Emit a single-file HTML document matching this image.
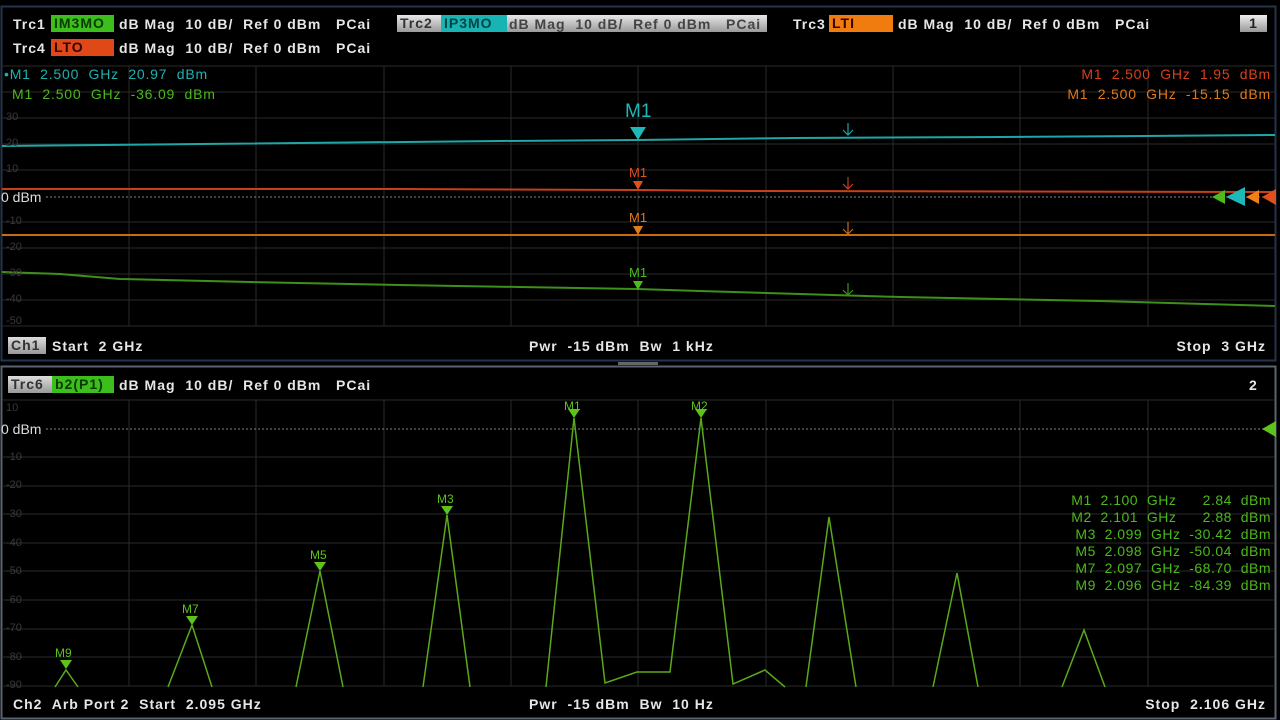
<!DOCTYPE html>
<html><head><meta charset="utf-8"><style>
body{margin:0;width:1280px;height:720px;background:#000;overflow:hidden;position:relative;font-family:"Liberation Sans",sans-serif;}
.t{position:absolute;font-size:14px;font-weight:bold;color:#e6e6e6;white-space:pre;line-height:16px;letter-spacing:1px;}
.m{position:absolute;font-size:14px;white-space:pre;line-height:16px;letter-spacing:0.8px;}
.g{position:absolute;font-size:11px;color:#3a3a3a;white-space:pre;line-height:14px;}
.tag{position:absolute;height:17px;line-height:17px;font-size:14px;font-weight:bold;padding:0 3px;box-sizing:border-box;white-space:pre;letter-spacing:1px;}
svg{position:absolute;left:0;top:0;}
</style></head><body>
<svg width="1280" height="720">
<rect x="1.5" y="6.5" width="1274" height="354" fill="none" stroke="#23354d" stroke-width="2"/>
<rect x="1.5" y="366.5" width="1274" height="352" fill="none" stroke="#5a6470" stroke-width="2"/>
<rect x="618" y="362" width="40" height="3" fill="#666"/>
<g stroke="#2a2a2a" stroke-width="1">
<line x1="2" y1="66" x2="1275" y2="66"/><line x1="2" y1="92" x2="1275" y2="92"/><line x1="2" y1="118" x2="1275" y2="118"/><line x1="2" y1="144" x2="1275" y2="144"/><line x1="2" y1="170" x2="1275" y2="170"/><line x1="2" y1="222" x2="1275" y2="222"/><line x1="2" y1="248" x2="1275" y2="248"/><line x1="2" y1="274" x2="1275" y2="274"/><line x1="2" y1="300" x2="1275" y2="300"/><line x1="2" y1="326" x2="1275" y2="326"/>
<line x1="129" y1="66" x2="129" y2="326"/><line x1="256" y1="66" x2="256" y2="326"/><line x1="384" y1="66" x2="384" y2="326"/><line x1="511" y1="66" x2="511" y2="326"/><line x1="638" y1="66" x2="638" y2="326"/><line x1="766" y1="66" x2="766" y2="326"/><line x1="893" y1="66" x2="893" y2="326"/><line x1="1020" y1="66" x2="1020" y2="326"/><line x1="1148" y1="66" x2="1148" y2="326"/>
</g>
<line x1="46" y1="197" x2="1275" y2="197" stroke="#888" stroke-dasharray="2,2"/>
<polyline fill="none" stroke="#1fa6a6" stroke-width="2" points="2,146 200,144 500,141 637,140 795,138 1000,137 1275,135"/>
<polyline fill="none" stroke="#c8401a" stroke-width="2" points="2,189 400,189 637,190 750,191 1275,192"/>
<polyline fill="none" stroke="#c86a14" stroke-width="2" points="2,235 1275,235"/>
<polyline fill="none" stroke="#3f8f1a" stroke-width="2" points="2,272 60,274 120,279 250,282 400,285 520,287 637,289 700,291 800,294 900,297 1000,299 1100,301 1275,306"/>
<polygon points="630,127 646,127 638,140" fill="#1fb8b8"/>
<polygon points="633,181 643,181 638,190" fill="#e0501c"/>
<polygon points="633,226 643,226 638,235" fill="#e07a1c"/>
<polygon points="633,281 643,281 638,290" fill="#4cbb1c"/>
<g fill="none" stroke-width="1.2">
<path d="M848,123v11M843,130l5,5l5,-5" stroke="#1fa6a6"/>
<path d="M848,177v11M843,184l5,5l5,-5" stroke="#c8401a"/>
<path d="M848,222v11M843,229l5,5l5,-5" stroke="#c86a14"/>
<path d="M848,283v11M843,290l5,5l5,-5" stroke="#3f8f1a"/>
</g>
<polygon points="1212,197 1225,190 1225,204" fill="#4cbb1c"/>
<polygon points="1226,197 1245,187 1245,206" fill="#1fb8b8"/>
<polygon points="1246,197 1259,190 1259,204" fill="#f08018"/>
<polygon points="1262,197 1276,189 1276,205" fill="#e0501c"/>
<g stroke="#2a2a2a" stroke-width="1">
<line x1="2" y1="400" x2="1275" y2="400"/><line x1="2" y1="457" x2="1275" y2="457"/><line x1="2" y1="486" x2="1275" y2="486"/><line x1="2" y1="514" x2="1275" y2="514"/><line x1="2" y1="543" x2="1275" y2="543"/><line x1="2" y1="571" x2="1275" y2="571"/><line x1="2" y1="600" x2="1275" y2="600"/><line x1="2" y1="629" x2="1275" y2="629"/><line x1="2" y1="657" x2="1275" y2="657"/><line x1="2" y1="686" x2="1275" y2="686"/>
<line x1="129" y1="400" x2="129" y2="686"/><line x1="256" y1="400" x2="256" y2="686"/><line x1="384" y1="400" x2="384" y2="686"/><line x1="511" y1="400" x2="511" y2="686"/><line x1="638" y1="400" x2="638" y2="686"/><line x1="766" y1="400" x2="766" y2="686"/><line x1="893" y1="400" x2="893" y2="686"/><line x1="1020" y1="400" x2="1020" y2="686"/><line x1="1148" y1="400" x2="1148" y2="686"/>
</g>
<line x1="46" y1="429" x2="1275" y2="429" stroke="#888" stroke-dasharray="2,2"/>
<g fill="none" stroke="#5aa91a" stroke-width="1.5">
<polyline points="55,687 66,670 78,687"/>
<polyline points="168,687 192,625 212,687"/>
<polyline points="296,687 320,571 343,687"/>
<polyline points="423,687 447,515 470,687"/>
<polyline points="546,687 574,418 605,683 637,672 670,672 701,418 733,684 765,670 785,687"/>
<polyline points="806,687 829,517 856,687"/>
<polyline points="933,687 957,573 978,687"/>
<polyline points="1062,687 1084,630 1105,687"/>
</g>
<g fill="#5cc21c">
<polygon points="60,660 72,660 66,669"/>
<polygon points="186,616 198,616 192,625"/>
<polygon points="314,562 326,562 320,571"/>
<polygon points="441,506 453,506 447,515"/>
<polygon points="568,409 580,409 574,418"/>
<polygon points="695,409 707,409 701,418"/>
<polygon points="1262,429 1276,421 1276,437"/>
</g>
</svg>
<div class="t" style="left:13px;top:16px">Trc1</div>
<div class="tag" style="left:51px;top:15px;width:63px;background:#3cbe1c;color:#0a3a00">IM3MO</div>
<div class="t" style="left:119px;top:16px">dB Mag  10 dB/  Ref 0 dBm   PCai</div>
<div class="tag" style="left:397px;top:15px;width:370px;background:linear-gradient(#e8e8e8,#9a9a9a);color:#333">Trc2 </div>
<div class="tag" style="left:441px;top:15px;width:66px;background:#18b4b4;color:#044">IP3MO</div>
<div class="t" style="left:509px;top:16px;color:#444">dB Mag  10 dB/  Ref 0 dBm   PCai</div>
<div class="t" style="left:793px;top:16px">Trc3</div>
<div class="tag" style="left:829px;top:15px;width:64px;background:#f07c10;color:#300">LTI</div>
<div class="t" style="left:898px;top:16px">dB Mag  10 dB/  Ref 0 dBm   PCai</div>
<div class="tag" style="left:1240px;top:15px;width:27px;background:linear-gradient(#eee,#999);color:#222;text-align:center">1</div>
<div class="t" style="left:13px;top:40px">Trc4</div>
<div class="tag" style="left:51px;top:39px;width:63px;background:#e04818;color:#300">LTO</div>
<div class="t" style="left:119px;top:40px">dB Mag  10 dB/  Ref 0 dBm   PCai</div>
<div class="m" style="left:4px;top:66px;color:#1fb0b0">•M1  2.500  GHz  20.97  dBm</div>
<div class="m" style="left:12px;top:86px;color:#4cb81c">M1  2.500  GHz  -36.09  dBm</div>
<div class="m" style="right:9px;top:66px;color:#d8401a">M1  2.500  GHz  1.95  dBm</div>
<div class="m" style="right:9px;top:86px;color:#e0781a">M1  2.500  GHz  -15.15  dBm</div>
<div class="m" style="left:625px;top:104px;color:#1fb8b8;font-size:19px;letter-spacing:0">M1</div>
<div class="m" style="left:629px;top:165px;color:#e0501c;font-size:13px;letter-spacing:0">M1</div>
<div class="m" style="left:629px;top:210px;color:#e07a1c;font-size:13px;letter-spacing:0">M1</div>
<div class="m" style="left:629px;top:265px;color:#4cbb1c;font-size:13px;letter-spacing:0">M1</div>
<div class="g" style="left:6px;top:110px">30</div>
<div class="g" style="left:6px;top:136px">20</div>
<div class="g" style="left:6px;top:162px">10</div>
<div class="m" style="left:1px;top:189px;color:#ddd;letter-spacing:0">0 dBm</div>
<div class="g" style="left:6px;top:214px">-10</div>
<div class="g" style="left:6px;top:240px">-20</div>
<div class="g" style="left:6px;top:266px">-30</div>
<div class="g" style="left:6px;top:292px">-40</div>
<div class="g" style="left:6px;top:314px">-50</div>
<div class="tag" style="left:8px;top:337px;width:38px;background:linear-gradient(#ddd,#999);color:#333">Ch1</div>
<div class="t" style="left:52px;top:338px">Start  2 GHz</div>
<div class="t" style="left:529px;top:338px">Pwr  -15 dBm  Bw  1 kHz</div>
<div class="t" style="right:14px;top:338px">Stop  3 GHz</div>
<div class="tag" style="left:8px;top:376px;width:44px;background:linear-gradient(#ddd,#999);color:#333">Trc6</div>
<div class="tag" style="left:52px;top:376px;width:62px;background:#3cbe1c;color:#0a3a00">b2(P1)</div>
<div class="t" style="left:119px;top:377px">dB Mag  10 dB/  Ref 0 dBm   PCai</div>
<div class="t" style="left:1249px;top:377px">2</div>
<div class="g" style="left:6px;top:401px">10</div>
<div class="m" style="left:1px;top:421px;color:#ddd;letter-spacing:0">0 dBm</div>
<div class="g" style="left:6px;top:450px">-10</div>
<div class="g" style="left:6px;top:478px">-20</div>
<div class="g" style="left:6px;top:507px">-30</div>
<div class="g" style="left:6px;top:536px">-40</div>
<div class="g" style="left:6px;top:564px">-50</div>
<div class="g" style="left:6px;top:593px">-60</div>
<div class="g" style="left:6px;top:621px">-70</div>
<div class="g" style="left:6px;top:650px">-80</div>
<div class="g" style="left:6px;top:678px">-90</div>
<div class="m" style="left:55px;top:645px;color:#5cc21c;font-size:12px;letter-spacing:0">M9</div>
<div class="m" style="left:182px;top:601px;color:#5cc21c;font-size:12px;letter-spacing:0">M7</div>
<div class="m" style="left:310px;top:547px;color:#5cc21c;font-size:12px;letter-spacing:0">M5</div>
<div class="m" style="left:437px;top:491px;color:#5cc21c;font-size:12px;letter-spacing:0">M3</div>
<div class="m" style="left:564px;top:398px;color:#5cc21c;font-size:12px;letter-spacing:0">M1</div>
<div class="m" style="left:691px;top:398px;color:#5cc21c;font-size:12px;letter-spacing:0">M2</div>
<div class="m" style="right:9px;top:492px;color:#4cb81c;line-height:17px;text-align:right;letter-spacing:0.5px">M1  2.100  GHz      2.84  dBm
M2  2.101  GHz      2.88  dBm
M3  2.099  GHz  -30.42  dBm
M5  2.098  GHz  -50.04  dBm
M7  2.097  GHz  -68.70  dBm
M9  2.096  GHz  -84.39  dBm</div>
<div class="t" style="left:13px;top:696px">Ch2  Arb Port 2  Start  2.095 GHz</div>
<div class="t" style="left:529px;top:696px">Pwr  -15 dBm  Bw  10 Hz</div>
<div class="t" style="right:14px;top:696px">Stop  2.106 GHz</div>
</body></html>
